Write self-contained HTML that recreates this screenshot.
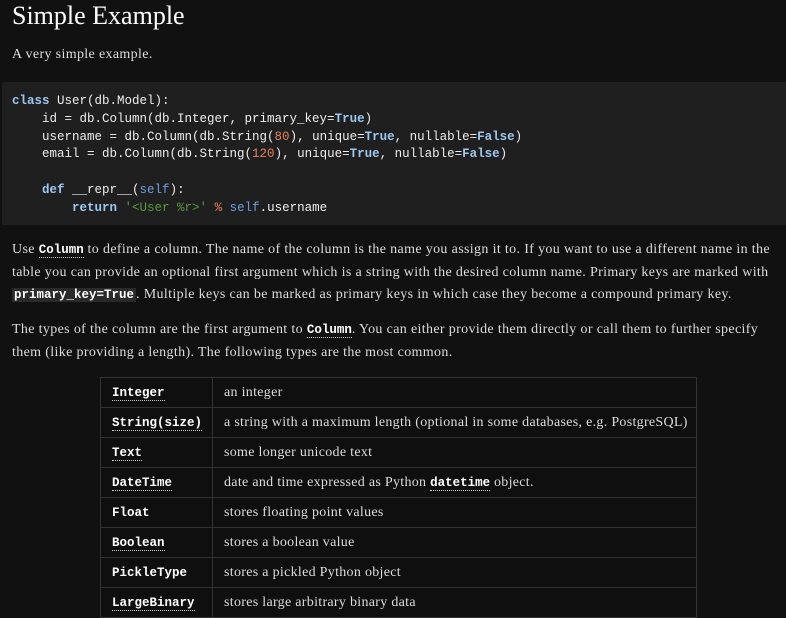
<!DOCTYPE html>
<html><head><style>
html,body{margin:0;padding:0;background:#111;width:786px;height:616px;overflow:hidden}
body{color:#ddd;font-family:"Liberation Serif",serif;font-size:14px}
h1{font-weight:normal;font-size:26px;color:#fff;margin:0;position:absolute;left:12px;top:1px;line-height:30px}
.p{position:absolute;left:12px;line-height:22.5px;width:780px;white-space:nowrap;letter-spacing:0.35px}
pre{position:absolute;left:2px;top:82px;width:784px;height:143px;margin:0;background:#1f1f1f;font-family:"Liberation Mono",monospace;font-size:12.5px;line-height:17.8px;color:#eee;padding:11px 0 0 10px;box-sizing:border-box}
.k{color:#9cc8f0;font-weight:bold}.n{color:#e8825a}.s{color:#5a9a3a}.c{color:#6fa0d8}
code{font-family:"Liberation Mono",monospace;font-weight:bold;font-size:12.5px;color:#fff;border-bottom:1px dotted #ccc;letter-spacing:0}
code.bg{background:#2a2a2a;border:none;padding:0 2px}
table{position:absolute;left:100px;top:377px;width:597px;border-collapse:collapse;background:#0f0f0f}
td{border:1px solid #333;height:29px;padding:0 0 0 11px;font-size:14px;letter-spacing:0.3px;color:#ddd;white-space:nowrap}
td:first-child{width:100px}
</style></head><body>
<h1>Simple Example</h1>
<div class="p" style="top:44px">A very simple example.</div>
<pre><span class="k">class</span> User(db.Model):
    id = db.Column(db.Integer, primary_key=<span class="k">True</span>)
    username = db.Column(db.String(<span class="n">80</span>), unique=<span class="k">True</span>, nullable=<span class="k">False</span>)
    email = db.Column(db.String(<span class="n">120</span>), unique=<span class="k">True</span>, nullable=<span class="k">False</span>)

    <span class="k">def</span> __repr__(<span class="c">self</span>):
        <span class="k">return</span> <span class="s">'&lt;User %r&gt;'</span> <span class="n">%</span> <span class="c">self</span>.username</pre>
<div class="p" style="top:239px">Use <code>Column</code> to define a column. The name of the column is the name you assign it to. If you want to use a different name in the<br>table you can provide an optional first argument which is a string with the desired column name. Primary keys are marked with<br><code class="bg">primary_key=True</code>. Multiple keys can be marked as primary keys in which case they become a compound primary key.</div>
<div class="p" style="top:319px">The types of the column are the first argument to <code>Column</code>. You can either provide them directly or call them to further specify<br>them (like providing a length). The following types are the most common.</div>
<table>
<tr><td><code>Integer</code></td><td>an integer</td></tr>
<tr><td><code>String(size)</code></td><td>a string with a maximum length (optional in some databases, e.g. PostgreSQL)</td></tr>
<tr><td><code>Text</code></td><td>some longer unicode text</td></tr>
<tr><td><code>DateTime</code></td><td>date and time expressed as Python <code>datetime</code> object.</td></tr>
<tr><td><code style="border:none">Float</code></td><td>stores floating point values</td></tr>
<tr><td><code>Boolean</code></td><td>stores a boolean value</td></tr>
<tr><td><code style="border:none">PickleType</code></td><td>stores a pickled Python object</td></tr>
<tr><td><code>LargeBinary</code></td><td>stores large arbitrary binary data</td></tr>
</table>
</body></html>
